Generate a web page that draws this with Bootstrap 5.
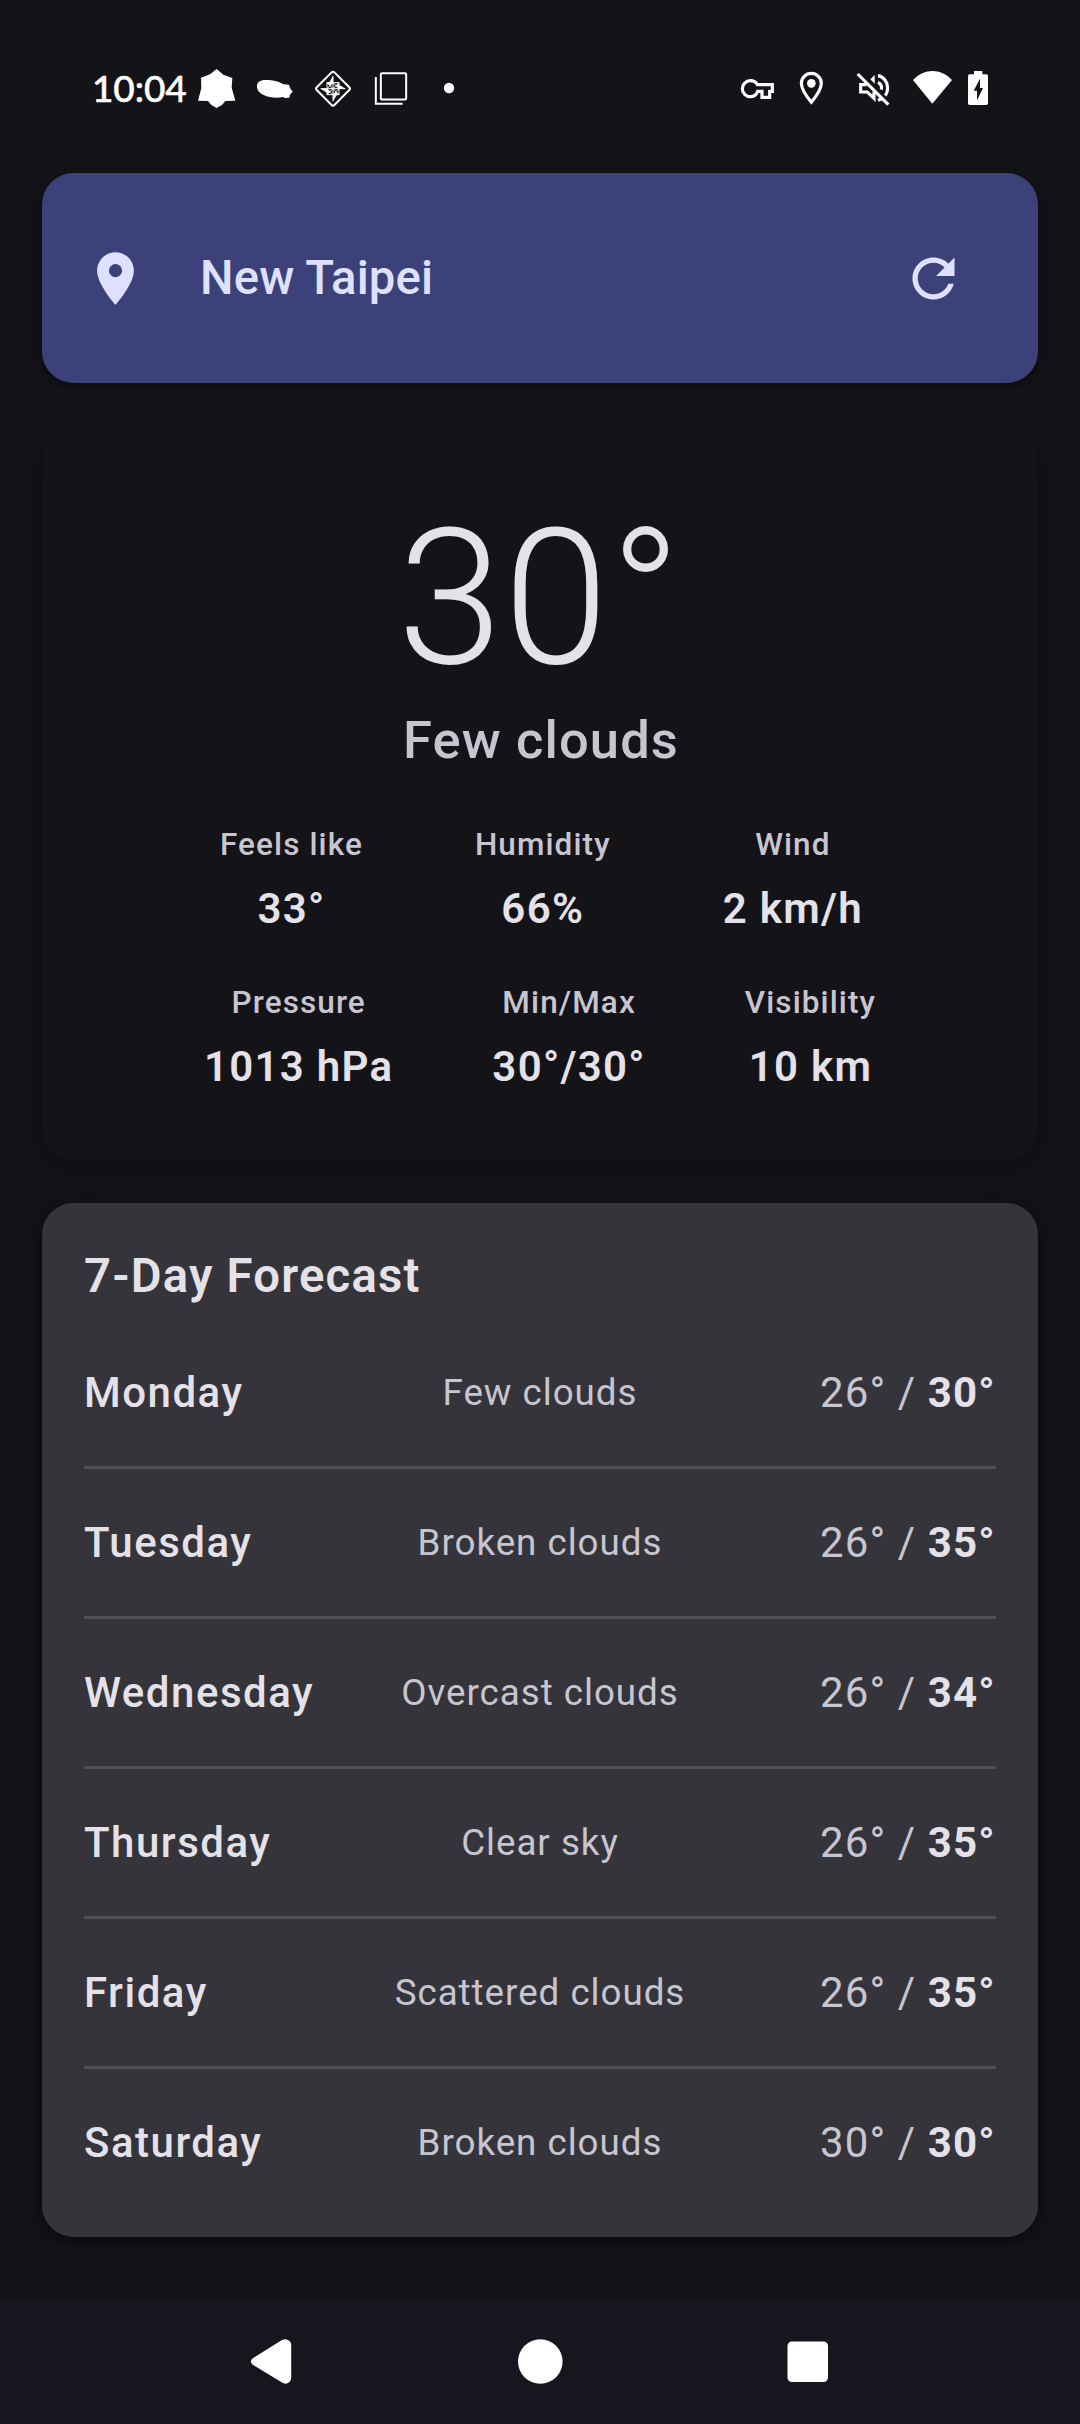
<!DOCTYPE html>
<html lang="en" data-bs-theme="dark">
<head>
<meta charset="utf-8">
<meta name="viewport" content="width=device-width, initial-scale=1">
<title>Weather</title>
<link href="https://cdn.jsdelivr.net/npm/bootstrap@5.3.0/dist/css/bootstrap.min.css" rel="stylesheet">
<style>
  body { width:1080px; height:2424px; background:#131318; color:#e4e1e9; font-family:Roboto,"Noto Sans",sans-serif; font-weight:500; overflow:hidden; }
  svg { display:block; flex:none; }
  .statusbar { height:173px; padding:68px 82px 0 92px; color:#fff; }
  .statusbar svg { width:40px; height:40px; }
  .clock { font-family:Lato,sans-serif; font-size:37px; line-height:39px; width:105px; letter-spacing:-.1px; white-space:nowrap; -webkit-text-stroke:.5px currentColor; }
  .notifs { gap:18px; }
  .gap-pin { margin-left:13px; }
  .gap-mute { margin-left:23px; }
  .gap-wifi { margin-left:18px; }
  .gap-battery { margin-left:6px; }
  .tile { border:0; border-radius:31.5px; }
  .screen { padding:0 42px; gap:42px; }
  .place { height:210px; background:#3c4279; color:#dfe0ff; padding:0 73px 0 42px; box-shadow:0 5px 12px rgba(0,0,0,.25), 0 0 8px rgba(0,0,0,.15); }
  .place svg { width:63px; height:63px; }
  .place-name { font-size:47.25px; line-height:63px; margin-left:53px; letter-spacing:.15px; }
  .now { height:736px; padding:63px; background:#131318; color:#e4e1e9; box-shadow:0 10px 24px rgba(0,0,0,.27); }
  .degrees { font-size:189px; font-weight:300; line-height:221px; letter-spacing:1.3px; }
  .sky { font-size:52.5px; line-height:62px; color:#c7c5d0; margin-bottom:53px; letter-spacing:1.1px; padding-left:2px; }
  .stats { gap:42px; }
  .stats-top { padding-left:3px; }
  .stat-label { font-size:31.5px; line-height:42px; letter-spacing:1.1px; color:#c7c5d0; margin-bottom:11px; }
  .stat-value { font-size:42px; line-height:63px; letter-spacing:1.3px; font-weight:600; }
  .forecast { height:1034px; padding:42px 42px 21px; background:#35343a; color:#e4e1e9; box-shadow:0 8px 16px rgba(0,0,0,.28), 0 0 8px rgba(0,0,0,.2); }
  .heading { font-size:47.25px; font-weight:600; line-height:62px; margin-bottom:12px; letter-spacing:1.2px; }
  .day { height:150px; border-bottom:3px solid #515056; font-size:42px; letter-spacing:1.5px; white-space:nowrap; }
  .day:last-child { border-color:transparent; }
  .desc { font-size:36.75px; font-weight:400; letter-spacing:.97px; color:#c7c5d0; }
  .low { font-weight:400; color:#c7c5d0; letter-spacing:1.1px; }
  .high { font-weight:700; letter-spacing:1.2px; }
  .softkeys { height:126px; margin-top:61px; padding-right:3px; background:#16161e; color:#fff; }
  .softkeys svg { width:60px; height:60px; }
  .home-key { margin:0 208px 0 210px; }
</style>
</head>
<body class="m-0">
<header class="statusbar d-flex">
  <div class="clock">10:04</div>
  <div class="notifs d-flex">
    <svg viewBox="351 54 120 120" fill="currentColor"><path d="M410 57l20 17 27 10-2 29 11 39-30 1-10 12-16 9-16-9-10-12-30-1 10-38-1-31 27-10z"/></svg>
    <svg viewBox="525 54 120 120" fill="currentColor"><path d="M531 107c1-12 12-17 27-17 20 0 35 3 53 13l16 1 3 10 8 11-8 9-2 9-13 1-6-3c-18 5-42 2-58-6-13-7-21-15-20-28z"/></svg>
    <svg viewBox="699 54 120 120" fill="none" stroke="currentColor"><rect x="721.500" y="78.500" width="75" height="75" rx="6" stroke-width="6" transform="rotate(45 759 116)"/><path stroke-width="3" d="M759 78v76M722 116h74M741 98h36v36h-36zM741 98l36 36M777 98l-36 36M759 98l18 18-18 18-18-18z"/><path fill="currentColor" stroke="none" d="M759 78v20h-12zM797 116h-20v-12zM759 154v-20h12zM721 116h20v12zM741 98h18l-9 9zM777 98v18l-9-9zM777 134h-18l9-9zM741 134v-18l9 9z"/></svg>
    <svg viewBox="873 54 120 120" fill="none" stroke="currentColor"><rect x="902.500" y="69.500" width="76" height="79" rx="3" stroke-width="6"/><path stroke-width="6" d="M887.500 81v80.500H968"/></svg>
    <svg viewBox="1047 54 120 120" fill="currentColor"><circle cx="1107" cy="114" r="15.500"/></svg>
  </div>
  <div class="d-flex ms-auto">
    <svg viewBox="54 54 120 120" fill="none" stroke="currentColor" stroke-width="9.500"><path d="M112 104h45v20h-8v18h-23v-18h-13c-4 10-11 16-22 16a24 24 0 1 1 0-48c10 0 17 4 21 12z"/><circle cx="91" cy="115" r="5" fill="none" stroke="none"/></svg>
    <svg class="gap-pin" viewBox="213 54 120 120" fill="none" stroke="currentColor" stroke-width="9.500"><path d="M274 157c-14-17-30-38-30-57a30 30 0 0 1 60 0c0 19-16 40-30 57z"/><circle cx="274" cy="100" r="13" fill="currentColor" stroke="none"/></svg>
    <svg class="gap-mute" viewBox="402 54 120 120" fill="none" stroke="currentColor" stroke-width="9.500"><path d="M413 72l92 92"/><path d="M440 104h-18v22h20l20 19v-20M474 77c17 3 29 19 29 37 0 9-3 17-7 23M474 97c8 4 12 13 10 22M474 151l12-5"/><path fill="currentColor" stroke="none" d="M451 88l13-13v26z"/></svg>
    <svg class="gap-wifi" viewBox="576 54 120 120" fill="currentColor"><path d="M637 161L579 90c34-36 83-36 117 0z"/></svg>
    <svg class="gap-battery" viewBox="714 54 120 120" fill="currentColor"><path fill-rule="evenodd" d="M762 63h25v10h12q5 0 5 5v82q0 5-5 5h-50q-5 0-5-5V78q0-5 5-5h13zM780 86l-19 36h10v29l18-37h-9z"/></svg>
  </div>
</header>

<main class="screen d-flex flex-column">
  <section class="tile place card flex-row align-items-center">
    <svg viewBox="0 0 24 24" fill="currentColor"><path d="M12 2C8.130 2 5 5.130 5 9c0 5.250 7 13 7 13s7-7.750 7-13c0-3.870-3.130-7-7-7zm0 9.500a2.500 2.500 0 0 1 0-5 2.500 2.500 0 0 1 0 5z"/></svg>
    <div class="place-name">New Taipei</div>
    <svg class="ms-auto" viewBox="0 0 24 24" fill="currentColor"><path d="M17.650 6.350C16.200 4.900 14.210 4 12 4c-4.420 0-7.990 3.580-7.990 8s3.570 8 7.990 8c3.730 0 6.840-2.550 7.730-6h-2.080c-.82 2.330-3.040 4-5.650 4-3.310 0-6-2.690-6-6s2.690-6 6-6c1.660 0 3.140.69 4.220 1.780L13 11h7V4l-2.350 2.350z"/></svg>
  </section>

  <section class="tile now card text-center">
    <div class="degrees">30°</div>
    <div class="sky">Few clouds</div>
    <div class="stats d-flex flex-column">
      <div class="stats-top d-flex justify-content-evenly">
        <div><div class="stat-label">Feels like</div><div class="stat-value">33°</div></div>
        <div><div class="stat-label">Humidity</div><div class="stat-value">66%</div></div>
        <div><div class="stat-label">Wind</div><div class="stat-value">2 km/h</div></div>
      </div>
      <div class="d-flex justify-content-evenly">
        <div><div class="stat-label">Pressure</div><div class="stat-value">1013 hPa</div></div>
        <div><div class="stat-label">Min/Max</div><div class="stat-value">30°/30°</div></div>
        <div><div class="stat-label">Visibility</div><div class="stat-value">10 km</div></div>
      </div>
    </div>
  </section>

  <section class="tile forecast card">
    <div class="heading">7-Day Forecast</div>
    <div>
      <div class="day row g-0 align-items-center"><div class="col-4">Monday</div><div class="col-4 desc text-center">Few clouds</div><div class="col-4 text-end"><span class="low">26° / </span><span class="high">30°</span></div></div>
      <div class="day row g-0 align-items-center"><div class="col-4">Tuesday</div><div class="col-4 desc text-center">Broken clouds</div><div class="col-4 text-end"><span class="low">26° / </span><span class="high">35°</span></div></div>
      <div class="day row g-0 align-items-center"><div class="col-4">Wednesday</div><div class="col-4 desc text-center">Overcast clouds</div><div class="col-4 text-end"><span class="low">26° / </span><span class="high">34°</span></div></div>
      <div class="day row g-0 align-items-center"><div class="col-4">Thursday</div><div class="col-4 desc text-center">Clear sky</div><div class="col-4 text-end"><span class="low">26° / </span><span class="high">35°</span></div></div>
      <div class="day row g-0 align-items-center"><div class="col-4">Friday</div><div class="col-4 desc text-center">Scattered clouds</div><div class="col-4 text-end"><span class="low">26° / </span><span class="high">35°</span></div></div>
      <div class="day row g-0 align-items-center"><div class="col-4">Saturday</div><div class="col-4 desc text-center">Broken clouds</div><div class="col-4 text-end"><span class="low">30° / </span><span class="high">30°</span></div></div>
    </div>
  </section>
</main>

<nav class="softkeys d-flex justify-content-center align-items-center">
  <svg viewBox="0 0 60 60" fill="currentColor"><path d="M12.500 27.500L42 9Q45 7.500 48 9Q51.200 10.500 51.200 14V46.500Q51.200 50 48 52Q45 53.500 42 51.500L12.500 33.500Q9.200 30.500 12.500 27.500z"/></svg>
  <svg class="home-key" viewBox="0 0 60 60" fill="currentColor"><circle cx="30.300" cy="30.500" r="22.300"/></svg>
  <svg viewBox="0 0 60 60" fill="currentColor"><rect x="9.500" y="10.500" width="40.500" height="40.500" rx="4.500"/></svg>
</nav>
<script src="https://cdn.jsdelivr.net/npm/bootstrap@5.3.0/dist/js/bootstrap.bundle.min.js"></script>
</body>
</html>
